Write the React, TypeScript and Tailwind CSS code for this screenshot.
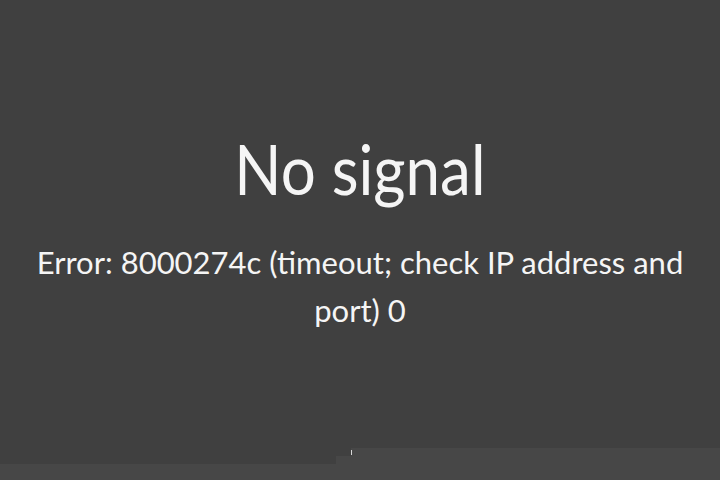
export default function App() {
  return (
    <div className="flex h-[480px] w-[720px] flex-col bg-[#404040] text-white" style={{ fontFamily: "Lato, 'Open Sans', sans-serif" }}>
      <div className="flex flex-1 flex-col items-center pt-[128px] text-center">
        <h1 className="scale-x-[0.885] text-[70px] leading-[80px] text-[#f5f5f5]">No signal</h1>
        <p className="mt-[30px] w-[680px] text-[31px] leading-[48px] text-[#f5f5f5]">
          Error: 8000274c (timeout; check IP address and port) 0
        </p>
      </div>
      {/* bottom strip */}
      <div className="flex h-[32px] items-end">
        <div className="h-[16px] w-[336px] bg-[#474747]" />
        <div className="h-[24px] w-[15px] bg-[#474747]" />
        <div className="relative h-[32px] flex-1 bg-[#474747]">
          <span className="absolute left-0 top-[2px] h-[5px] w-[1px] bg-[#d8d8d8]" />
        </div>
      </div>
    </div>
  );
}
